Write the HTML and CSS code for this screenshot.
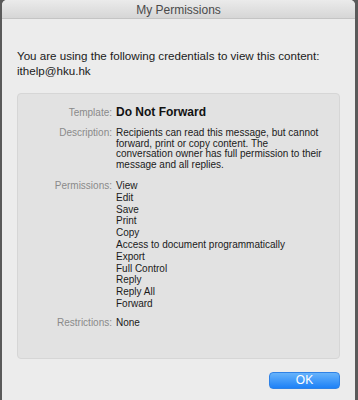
FILE: index.html
```html
<!DOCTYPE html>
<html>
<head>
<meta charset="utf-8">
<link rel="stylesheet" href="styles.css">
</head>
<body>
<div class="window">
  <div class="titlebar">My Permissions</div>
  <div class="content">
    <p class="intro">You are using the following credentials to view this content:</p>
    <p class="user">ithelp@hku.hk</p>
    <div class="panel">
      <div class="row row-template">
        <div class="label">Template:</div>
        <div class="value template">Do Not Forward</div>
      </div>
      <div class="row row-desc">
        <div class="label">Description:</div>
        <div class="value desc">Recipients can read this message, but cannot<br>forward, print or copy content. The<br>conversation owner has full permission to their<br>message and all replies.</div>
      </div>
      <div class="row row-perm">
        <div class="label">Permissions:</div>
        <ul class="value perms">
          <li>View</li>
          <li>Edit</li>
          <li>Save</li>
          <li>Print</li>
          <li>Copy</li>
          <li>Access to document programmatically</li>
          <li>Export</li>
          <li>Full Control</li>
          <li>Reply</li>
          <li>Reply All</li>
          <li>Forward</li>
        </ul>
      </div>
      <div class="row row-restr">
        <div class="label">Restrictions:</div>
        <div class="value">None</div>
      </div>
    </div>
    <div class="actions">
      <button class="ok">OK</button>
    </div>
  </div>
</div>
</body>
</html>
```

FILE: styles.css
```css
* { box-sizing: border-box; }
html, body {
  margin: 0;
  padding: 0;
  height: 400px;
  overflow: hidden;
}
body {
  background: #5a5a5a;
  font-family: "Liberation Sans", Arial, sans-serif;
  color: #222;
}
.window {
  margin: 0 3px 0 2px;
  height: 400px;
  background: #ececec;
  border-radius: 5px 5px 0 0;
  overflow: hidden;
}
.titlebar {
  height: 19px;
  line-height: 20px;
  text-align: center;
  font-size: 12px;
  color: #4a4a4a;
  background: linear-gradient(#ebebeb, #d6d6d6);
  border-bottom: 1px solid #c4c4c4;
}
.content {
  padding: 29px 15px 0 15px;
}
.intro, .user {
  margin: 0;
  font-size: 11.6px;
  line-height: 15px;
  color: #1a1a1a;
}
.panel {
  margin-top: 15px;
  height: 266px;
  background: #e2e2e2;
  border: 1px solid #d6d6d6;
  border-radius: 4px;
  padding-top: 11px;
}
.row {
  display: grid;
  grid-template-columns: 94px 1fr;
  column-gap: 4px;
  padding-right: 6px;
}
.label {
  text-align: right;
  font-size: 10px;
  color: #8a8a8a;
}
.value {
  font-size: 10px;
  color: #1a1a1a;
}
.desc { white-space: nowrap; }
.row-template { line-height: 14px; }
.row-template .label { line-height: 15px; }
.template {
  font-size: 12px;
  font-weight: bold;
  color: #111;
}
.row-desc { margin-top: 8px; line-height: 10.5px; }
.row-perm { margin-top: 10px; line-height: 11.8px; }
.row-restr { margin-top: 7px; line-height: 11.8px; }
.perms {
  list-style: none;
  margin: 0;
  padding: 0;
}
.actions {
  display: flex;
  justify-content: flex-end;
  margin-top: 13px;
}
.ok {
  width: 71px;
  height: 17px;
  padding: 0;
  border: 1px solid #2f82e6;
  border-radius: 4px;
  background: linear-gradient(#67b3fb, #1d81f7);
  color: #fff;
  font-family: "Liberation Sans", Arial, sans-serif;
  font-size: 12px;
  line-height: 15px;
}
```
